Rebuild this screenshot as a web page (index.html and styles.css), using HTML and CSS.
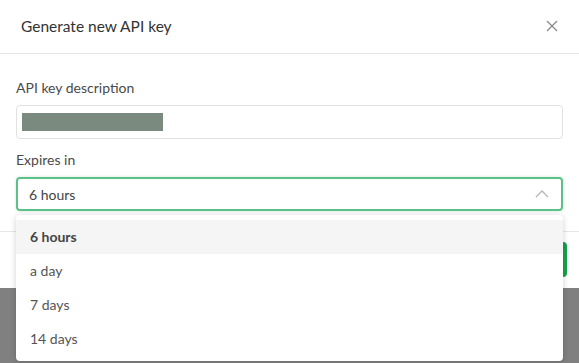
FILE: index.html
```html
<!DOCTYPE html>
<html lang="en">
<head>
    <meta charset="UTF-8">
    <title>Generate new API key</title>
    <link rel="stylesheet" href="styles.css">
</head>
<body>
    <div class="modal">
        <div class="modal-header">
            <h1>Generate new API key</h1>
            <button class="close" aria-label="Close">
                <svg width="12" height="12" viewBox="0 0 12 12"><path d="M1 1L11 11M11 1L1 11" stroke="#8a8a8a" stroke-width="1.3" fill="none"/></svg>
            </button>
        </div>

        <div class="modal-body">
            <div class="field">
                <label>API key description</label>
                <div class="text-input">
                    <span class="redacted"></span>
                </div>
            </div>

            <div class="field">
                <label>Expires in</label>
                <div class="select-wrap">
                    <div class="select">
                        <span>6 hours</span>
                        <svg width="14" height="8" viewBox="0 0 14 8"><path d="M1 7L7 1L13 7" stroke="#b5b5b5" stroke-width="1.3" fill="none"/></svg>
                    </div>
                    <!-- open dropdown -->
                    <ul class="menu">
                        <li class="active">6 hours</li>
                        <li>a day</li>
                        <li>7 days</li>
                        <li>14 days</li>
                    </ul>
                </div>
            </div>
        </div>

        <div class="modal-footer">
            <button class="btn-primary">Generate</button>
        </div>
    </div>
</body>
</html>
```

FILE: styles.css
```css
* {
    box-sizing: border-box;
    margin: 0;
    padding: 0;
}

body {
    font-family: 'Lato', 'Open Sans', sans-serif;
    background: #808080;
    color: #444;
    height: 363px;
    overflow: hidden;
}

.modal {
    width: 595px;
    background: #fff;
}

.modal-header {
    height: 54px;
    display: flex;
    align-items: center;
    justify-content: space-between;
    padding: 0 37px 2px 21px;
    border-bottom: 1px solid #e6e6e6;
}

.modal-header h1 {
    font-size: 15.5px;
    font-weight: 400;
    color: #333;
}

.close {
    border: none;
    background: none;
    display: flex;
    margin-top: 1px;
}

.modal-body {
    padding: 25px 32px 20px 16px;
}

.field + .field {
    margin-top: 12px;
}

label {
    display: block;
    font-size: 14px;
    color: #4a4a4a;
    margin-bottom: 8px;
    line-height: 18px;
}

.text-input {
    height: 34px;
    border: 1px solid #e2e2e2;
    border-radius: 4px;
    padding: 7px 5px;
}

.redacted {
    display: block;
    width: 141px;
    height: 18px;
    background: #7a8a7e;
}

.select-wrap {
    position: relative;
}

.select {
    height: 34px;
    border: 2px solid #5cc188;
    border-radius: 4px;
    box-shadow: 0 0 3px rgba(92, 193, 136, 0.35);
    display: flex;
    align-items: center;
    justify-content: space-between;
    padding: 0 12px 0 11px;
    font-size: 14px;
    color: #444;
}

.menu {
    position: absolute;
    top: 38px;
    left: 0;
    right: 0;
    list-style: none;
    background: #fff;
    border-radius: 4px;
    padding: 5px 0;
    box-shadow: 0 1px 6px rgba(0, 0, 0, 0.18);
    z-index: 2;
}

.menu li {
    height: 34px;
    line-height: 34px;
    padding: 0 14px;
    font-size: 14px;
    color: #555;
}

.menu li.active {
    background: #f5f5f5;
    font-weight: 700;
    color: #444;
}

.modal-footer {
    height: 57px;
    border-top: 1px solid #e6e6e6;
    display: flex;
    justify-content: flex-end;
    align-items: center;
    padding: 0 28px 1px 0;
}

.btn-primary {
    height: 35px;
    padding: 0 18px;
    border: none;
    border-radius: 4px;
    background: #16a34a;
    color: #fff;
    font-family: inherit;
    font-size: 14px;
}
```
